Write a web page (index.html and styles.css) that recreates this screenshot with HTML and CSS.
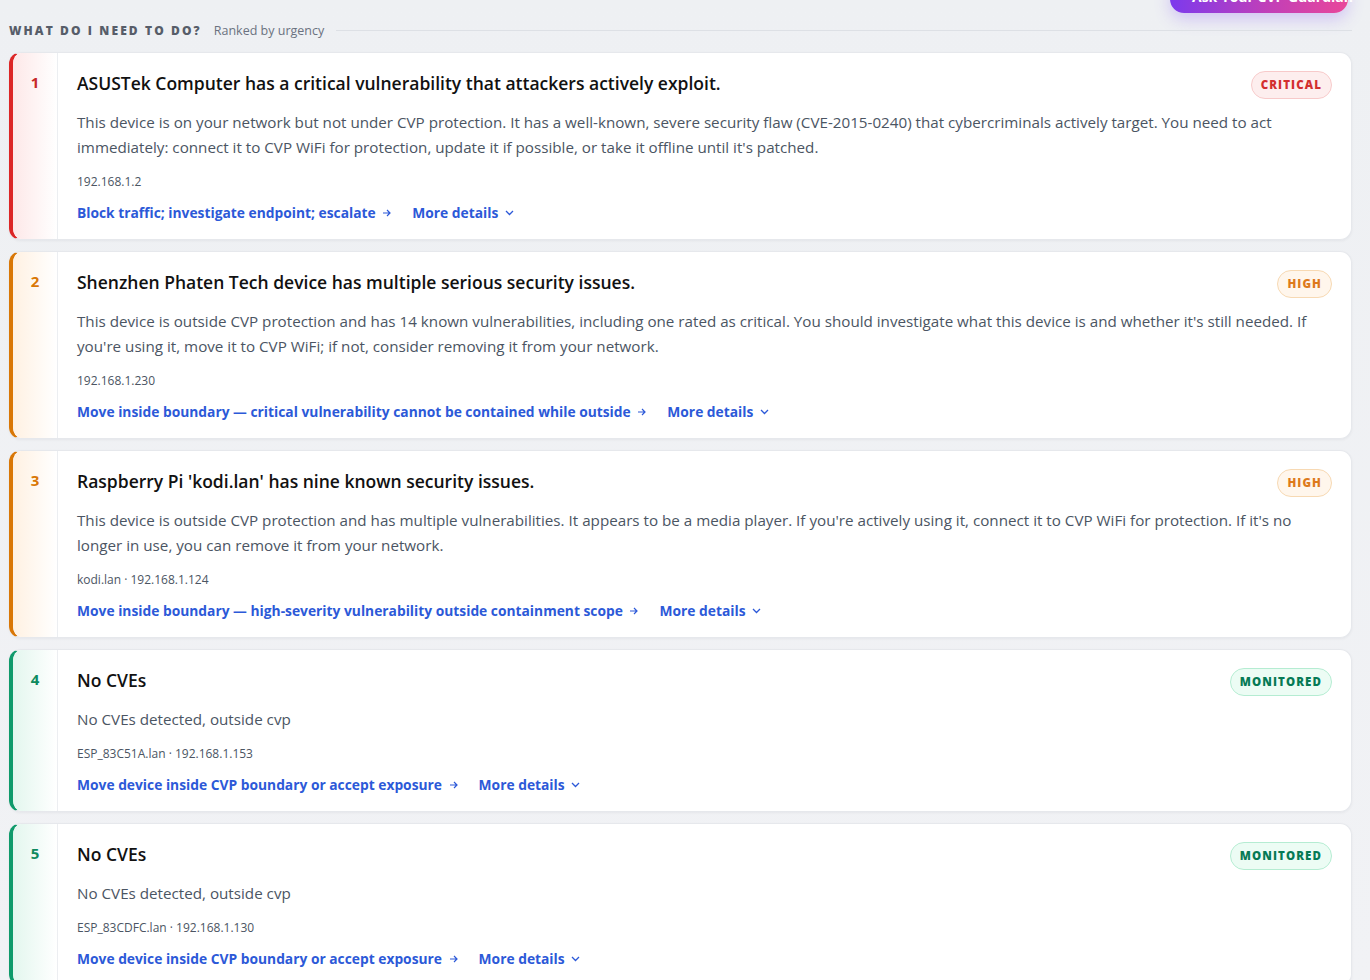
FILE: index.html
```html
<!DOCTYPE html>
<html lang="en">
  <head>
    <meta charset="UTF-8" />
    <meta name="viewport" content="width=device-width, initial-scale=1.0" />
    <title>What do I need to do?</title>
    <link rel="stylesheet" href="styles.css">
  </head>
  <body>
    <div class="page">
      <div class="topbar">
        <button class="guardian">
          <svg width="14" height="14" viewBox="0 0 24 24" fill="none" stroke="#fff" stroke-width="2" stroke-linecap="round"><path d="M12 3v4M12 17v4M3 12h4M17 12h4M6 6l2 2M16 16l2 2M6 18l2-2M16 8l2-2"/></svg>
          Ask Your CVP Guardian
        </button>
      </div>

      <div class="section-head">
        <span class="section-title">What do I need to do?</span>
        <span class="section-sub">Ranked by urgency</span>
        <span class="section-line"></span>
      </div>

      <div class="list">
        <div class="card critical">
          <div class="rail">1</div>
          <div class="body">
            <div class="title-row">
              <h3>ASUSTek Computer has a critical vulnerability that attackers actively exploit.</h3>
              <span class="badge">Critical</span>
            </div>
            <p class="desc">This device is on your network but not under CVP protection. It has a well-known, severe security flaw (CVE-2015-0240) that cybercriminals actively target. You need to act immediately: connect it to CVP WiFi for protection, update it if possible, or take it offline until it's patched.</p>
            <div class="meta">192.168.1.2</div>
            <div class="actions">
              <a href="#">Block traffic; investigate endpoint; escalate <svg class="arrow" width="10" height="10" viewBox="0 0 10 10"><path d="M1 5h7M5 2l3 3-3 3" fill="none" stroke="currentColor" stroke-width="1.2"/></svg></a>
              <a href="#">More details <svg class="chev" width="9" height="6" viewBox="0 0 9 6"><path d="M1 1l3.5 3.5L8 1" fill="none" stroke="currentColor" stroke-width="1.3"/></svg></a>
            </div>
          </div>
        </div>

        <div class="card high">
          <div class="rail">2</div>
          <div class="body">
            <div class="title-row">
              <h3>Shenzhen Phaten Tech device has multiple serious security issues.</h3>
              <span class="badge">High</span>
            </div>
            <p class="desc">This device is outside CVP protection and has 14 known vulnerabilities, including one rated as critical. You should investigate what this device is and whether it's still needed. If you're using it, move it to CVP WiFi; if not, consider removing it from your network.</p>
            <div class="meta">192.168.1.230</div>
            <div class="actions">
              <a href="#">Move inside boundary — critical vulnerability cannot be contained while outside <svg class="arrow" width="10" height="10" viewBox="0 0 10 10"><path d="M1 5h7M5 2l3 3-3 3" fill="none" stroke="currentColor" stroke-width="1.2"/></svg></a>
              <a href="#">More details <svg class="chev" width="9" height="6" viewBox="0 0 9 6"><path d="M1 1l3.5 3.5L8 1" fill="none" stroke="currentColor" stroke-width="1.3"/></svg></a>
            </div>
          </div>
        </div>

        <div class="card high">
          <div class="rail">3</div>
          <div class="body">
            <div class="title-row">
              <h3>Raspberry Pi 'kodi.lan' has nine known security issues.</h3>
              <span class="badge">High</span>
            </div>
            <p class="desc">This device is outside CVP protection and has multiple vulnerabilities. It appears to be a media player. If you're actively using it, connect it to CVP WiFi for protection. If it's no longer in use, you can remove it from your network.</p>
            <div class="meta">kodi.lan · 192.168.1.124</div>
            <div class="actions">
              <a href="#">Move inside boundary — high-severity vulnerability outside containment scope <svg class="arrow" width="10" height="10" viewBox="0 0 10 10"><path d="M1 5h7M5 2l3 3-3 3" fill="none" stroke="currentColor" stroke-width="1.2"/></svg></a>
              <a href="#">More details <svg class="chev" width="9" height="6" viewBox="0 0 9 6"><path d="M1 1l3.5 3.5L8 1" fill="none" stroke="currentColor" stroke-width="1.3"/></svg></a>
            </div>
          </div>
        </div>

        <div class="card monitored">
          <div class="rail">4</div>
          <div class="body">
            <div class="title-row">
              <h3>No CVEs</h3>
              <span class="badge">Monitored</span>
            </div>
            <p class="desc">No CVEs detected, outside cvp</p>
            <div class="meta">ESP_83C51A.lan · 192.168.1.153</div>
            <div class="actions">
              <a href="#">Move device inside CVP boundary or accept exposure <svg class="arrow" width="10" height="10" viewBox="0 0 10 10"><path d="M1 5h7M5 2l3 3-3 3" fill="none" stroke="currentColor" stroke-width="1.2"/></svg></a>
              <a href="#">More details <svg class="chev" width="9" height="6" viewBox="0 0 9 6"><path d="M1 1l3.5 3.5L8 1" fill="none" stroke="currentColor" stroke-width="1.3"/></svg></a>
            </div>
          </div>
        </div>

        <div class="card monitored">
          <div class="rail">5</div>
          <div class="body">
            <div class="title-row">
              <h3>No CVEs</h3>
              <span class="badge">Monitored</span>
            </div>
            <p class="desc">No CVEs detected, outside cvp</p>
            <div class="meta">ESP_83CDFC.lan · 192.168.1.130</div>
            <div class="actions">
              <a href="#">Move device inside CVP boundary or accept exposure <svg class="arrow" width="10" height="10" viewBox="0 0 10 10"><path d="M1 5h7M5 2l3 3-3 3" fill="none" stroke="currentColor" stroke-width="1.2"/></svg></a>
              <a href="#">More details <svg class="chev" width="9" height="6" viewBox="0 0 9 6"><path d="M1 1l3.5 3.5L8 1" fill="none" stroke="currentColor" stroke-width="1.3"/></svg></a>
            </div>
          </div>
        </div>
      </div>
    </div>
  </body>
</html>
```

FILE: styles.css
```css
body {
  margin: 0;
  font-family: "Open Sans", "Noto Sans", sans-serif;
  background: linear-gradient(180deg, #eef0f3 0%, #f1f2f5 100%);
  color: #111827;
  overflow: hidden;
}
.page {
  padding: 0 18px 0 9px;
}
.topbar {
  display: flex;
  justify-content: flex-end;
  margin-top: -21px;
  padding-right: 4px;
}
.guardian {
  display: flex;
  align-items: center;
  gap: 8px;
  height: 34px;
  width: 178px;
  padding: 0 14px;
  border: none;
  border-radius: 14px;
  background: linear-gradient(90deg, #7c3aed, #c13fb8 55%, #e9479a);
  color: #fff;
  font-family: inherit;
  font-size: 14px;
  font-weight: 700;
  white-space: nowrap;
  box-shadow: 0 6px 16px rgba(139, 92, 246, 0.3);
}
.section-head {
  display: flex;
  align-items: center;
  gap: 12px;
  height: 34px;
}
.section-title {
  font-size: 12px;
  font-weight: 800;
  letter-spacing: 2.1px;
  text-transform: uppercase;
  color: #575d69;
}
.section-sub {
  font-size: 12.5px;
  color: #6b7280;
}
.section-line {
  flex: 1;
  height: 1px;
  background: #dde0e5;
}
.list {
  display: flex;
  flex-direction: column;
  gap: 11px;
  margin-top: 5px;
}
.card {
  display: flex;
  background: #fff;
  border: 1px solid #e6e8ec;
  border-left: 4px solid #dc2626;
  border-radius: 12px;
  box-shadow: 0 1px 3px rgba(15, 23, 42, 0.05);
  overflow: hidden;
}
.rail {
  width: 44px;
  flex-shrink: 0;
  border-right: 1px solid #eceef1;
  text-align: center;
  padding-top: 19px;
  font-size: 15px;
  font-weight: 700;
  line-height: 20px;
}
.body {
  flex: 1;
  padding: 17px 19px 17px 19px;
}
.title-row {
  display: flex;
  align-items: flex-start;
  justify-content: space-between;
  gap: 20px;
}
h3 {
  margin: 0;
  font-size: 17.5px;
  font-weight: 600;
  line-height: 26px;
  color: #111;
}
.badge {
  flex-shrink: 0;
  margin-top: 1px;
  padding: 0 9px;
  height: 26px;
  line-height: 26px;
  border-radius: 14px;
  font-size: 11.5px;
  font-weight: 800;
  letter-spacing: 1.1px;
  text-transform: uppercase;
}
.desc {
  margin: 11px 0 0;
  font-size: 15.2px;
  line-height: 25px;
  color: #4b5563;
}
.meta {
  margin-top: 13px;
  font-size: 12px;
  line-height: 18px;
  color: #4b5563;
}
.actions {
  display: flex;
  gap: 20px;
  margin-top: 13px;
}
.actions a {
  font-size: 13.8px;
  font-weight: 700;
  line-height: 18px;
  color: #2c59d8;
  text-decoration: none;
}
.arrow {
  margin-left: 3px;
}
.chev {
  margin-left: 3px;
  vertical-align: 2px;
}
.critical {
  border-left-color: #dc2626;
}
.critical .rail {
  color: #c62828;
  background: linear-gradient(90deg, #fde8e8, #fff);
}
.critical .badge {
  color: #d32f2f;
  background: #fdeeee;
  border: 1px solid #f7caca;
}
.high {
  border-left-color: #d97706;
}
.high .rail {
  color: #d97706;
  background: linear-gradient(90deg, #fff1e2, #fff);
}
.high .badge {
  color: #dd7a1c;
  background: #fff6ec;
  border: 1px solid #f7d9b3;
}
.monitored {
  border-left-color: #0f9a6b;
}
.monitored .rail {
  color: #0f8a5f;
  background: linear-gradient(90deg, #e3f6ee, #fff);
}
.monitored .badge {
  color: #067a55;
  background: #ecfcf4;
  border: 1px solid #b5ecd2;
}
```
